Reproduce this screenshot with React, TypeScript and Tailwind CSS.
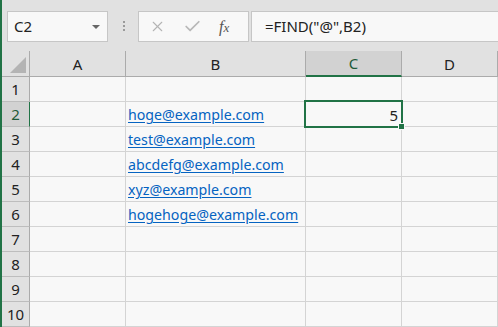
import { X, Check } from "lucide-react"

const cols = ["A", "B", "C", "D"]
const emails: Record<number, string> = {
  2: "hoge@example.com",
  3: "test@example.com",
  4: "abcdefg@example.com",
  5: "xyz@example.com",
  6: "hogehoge@example.com",
}

const font = { fontFamily: '"Noto Sans", "Noto Sans CJK JP", sans-serif' }

export default function App() {
  const rows = Array.from({ length: 10 }, (_, i) => i + 1)

  return (
    <div className="flex h-[327px] w-[498px] flex-col overflow-hidden border-l-2 border-[#217346] bg-[#e1e1e1]" style={font}>
      {/* formula bar */}
      <div className="flex h-[51px] shrink-0 items-start pt-[11px]">
        <div className="ml-[5px] flex h-[31px] w-[101px] items-center justify-between border border-[#c6c6c6] bg-[#f8f8f8] pl-[6px] pr-[7px]">
          <span className="text-[15px] text-[#222]">C2</span>
          <span className="h-0 w-0 border-x-[4px] border-t-[4px] border-x-transparent border-t-[#666]" />
        </div>
        <div className="ml-[15px] mt-[10px] flex flex-col gap-[2px]">
          <span className="h-[2px] w-[2px] bg-[#9a9a9a]" />
          <span className="h-[2px] w-[2px] bg-[#9a9a9a]" />
          <span className="h-[2px] w-[2px] bg-[#9a9a9a]" />
        </div>
        <div className="ml-[13px] flex h-[31px] w-[111px] items-center border border-[#c6c6c6] bg-[#f8f8f8]">
          <X size={17} strokeWidth={1.5} className="ml-[10px] text-[#b4b4b4]" />
          <Check size={19} strokeWidth={2.2} className="ml-[17px] text-[#b8b8b8]" />
          <span className="ml-[17px] text-[16px] italic text-[#555]" style={{ fontFamily: '"Liberation Serif", serif' }}>
            f<span className="text-[13px]">x</span>
          </span>
        </div>
        <div className="ml-[2px] flex h-[31px] flex-1 items-center border border-r-0 border-[#c6c6c6] bg-[#f8f8f8] pl-[13px] text-[15px] text-[#222]">
          =FIND("@",B2)
        </div>
      </div>

      {/* sheet grid */}
      <div className="grid grid-cols-[28px_96px_180px_96px_96px] grid-rows-[26px_repeat(10,25px)] text-[15px] text-[#222]">
        <div className="relative border-b border-r border-[#ababab] bg-[#e1e1e1]">
          <span className="absolute bottom-[3px] right-[3px] h-0 w-0 border-b-[16px] border-l-[16px] border-b-[#b4b4b4] border-l-transparent" />
        </div>
        {cols.map((c) => (
          <div
            key={c}
            className={`flex items-center justify-center border-r border-[#ababab] pt-[1px] ${
              c === "C" ? "border-b-2 border-b-[#217346] bg-[#d2d2d2] text-[#1e5a38]" : "border-b bg-[#e1e1e1]"
            }`}
          >
            {c}
          </div>
        ))}

        {rows.map((r) => (
          <Row key={r} r={r} />
        ))}
      </div>
    </div>
  )
}

function Row({ r }: { r: number }) {
  const sel = r === 2
  return (
    <>
      <div
        className={`flex items-center justify-center border-b border-[#bdbdbd] ${
          sel ? "border-r border-r-[#217346] bg-[#d2d2d2] text-[#1e5a38]" : "border-r border-r-[#ababab] bg-[#e1e1e1]"
        }`}
      >
        {r}
      </div>
      <div className="border-b border-r border-[#d4d4d4] bg-[#f8f8f8]" />
      <div className="flex items-center overflow-visible whitespace-nowrap border-b border-r border-[#d4d4d4] bg-[#f8f8f8] pl-[2px] pt-[2px] text-[14.2px]">
        {emails[r] && <span className="text-[#0563c1] underline underline-offset-2">{emails[r]}</span>}
      </div>
      <div className="relative flex items-center justify-end border-b border-r border-[#d4d4d4] bg-[#f8f8f8] pr-[3px] pt-[2px]">
        {sel && (
          <>
            <span>5</span>
            <span className="pointer-events-none absolute -left-[2px] -top-[2px] z-10 h-[28px] w-[99px] border-2 border-[#217346]" />
            <span className="absolute left-[92px] top-[21px] z-20 h-[7px] w-[7px] border border-[#f8f8f8] bg-[#217346]" />
          </>
        )}
      </div>
      <div className="border-b border-r border-[#d4d4d4] bg-[#f8f8f8]" />
    </>
  )
}
